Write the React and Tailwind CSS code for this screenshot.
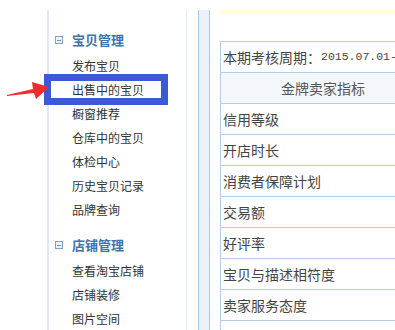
import React from "react";

const goodsItems = ["发布宝贝", "出售中的宝贝", "橱窗推荐", "仓库中的宝贝", "体检中心", "历史宝贝记录", "品牌查询"];
const shopItems = ["查看淘宝店铺", "店铺装修", "图片空间"];
const metricRows = ["信用等级", "开店时长", "消费者保障计划", "交易额", "好评率", "宝贝与描述相符度", "卖家服务态度", "物流服务"];

const cjk = { fontFamily: '"Noto Sans CJK SC", "Noto Sans", sans-serif' };

function MinusBox() {
  return (
    <span className="flex h-[8px] w-[8px] items-center justify-center border border-[#7fa3c3] bg-[#eef3f8]">
      <span className="h-px w-[4px] bg-[#6f94b6]" />
    </span>
  );
}

function MenuGroup({ title, items, className }) {
  return (
    <div className={className}>
      <div className="flex h-[24px] items-center">
        <div className="ml-[6px] mr-[9px]">
          <MinusBox />
        </div>
        <span className="text-[13px] font-bold leading-[24px] text-[#3e74a8]">{title}</span>
      </div>
      <div className="mt-[2px]">
        {items.map((item) => (
          <div key={item} className="h-[24px] pl-[23px] text-[12px] leading-[24px] text-[#333]">
            {item}
          </div>
        ))}
      </div>
    </div>
  );
}

export default function App() {
  return (
    <div className="relative flex h-[330px] w-[395px] overflow-hidden bg-white pt-[10px]" style={cjk}>
      <div className="w-[47px] shrink-0" />

      <div className="w-[140px] shrink-0 border-l-2 border-r border-[#dfe8f3] border-r-[#e4eaf0] pt-[18px]">
        <MenuGroup title="宝贝管理" items={goodsItems} />
        <MenuGroup title="店铺管理" items={shopItems} className="mt-[11px]" />
      </div>

      <div className="w-[11px] shrink-0" />
      <div className="w-[12px] shrink-0 border-x border-[#a9c5e6] bg-[#eaf3fd]" />
      <div className="w-[10px] shrink-0" />

      <div className="w-[205px] shrink-0">
        <div className="h-[3px] bg-[#ffffdc]" />
        <div className="mt-[28px] border-l border-t border-[#b7cde6] text-[14px] text-[#444]">
          <div className="flex h-[31px] items-center whitespace-nowrap border-b border-[#b7cde6] pl-[2px]">
            本期考核周期：
            <span className="text-[11.5px]" style={{ fontFamily: '"Liberation Mono", monospace' }}>
              2015.07.01-2015.07.31
            </span>
          </div>
          <div className="flex h-[31px] items-center justify-center border-b border-[#b7cde6] bg-[#f4f8fc] text-[#555]">
            金牌卖家指标
          </div>
          {metricRows.map((row) => (
            <div key={row} className="flex h-[31px] items-center border-b border-[#b7cde6] pl-[2px]">
              {row}
            </div>
          ))}
        </div>
      </div>

      {/* highlight box over the selected menu item */}
      <div className="pointer-events-none absolute left-[44px] top-[74px] h-[31px] w-[124px] border-[7px] border-[#3a5ad6]" />

      {/* red pointer arrow */}
      <svg className="absolute left-0 top-[74px]" width="60" height="32" viewBox="0 0 60 32">
        <polygon points="7,21 33,15 32,8 49,13 36,25 34,19 7,22" fill="#f02c2c" />
      </svg>
    </div>
  );
}
